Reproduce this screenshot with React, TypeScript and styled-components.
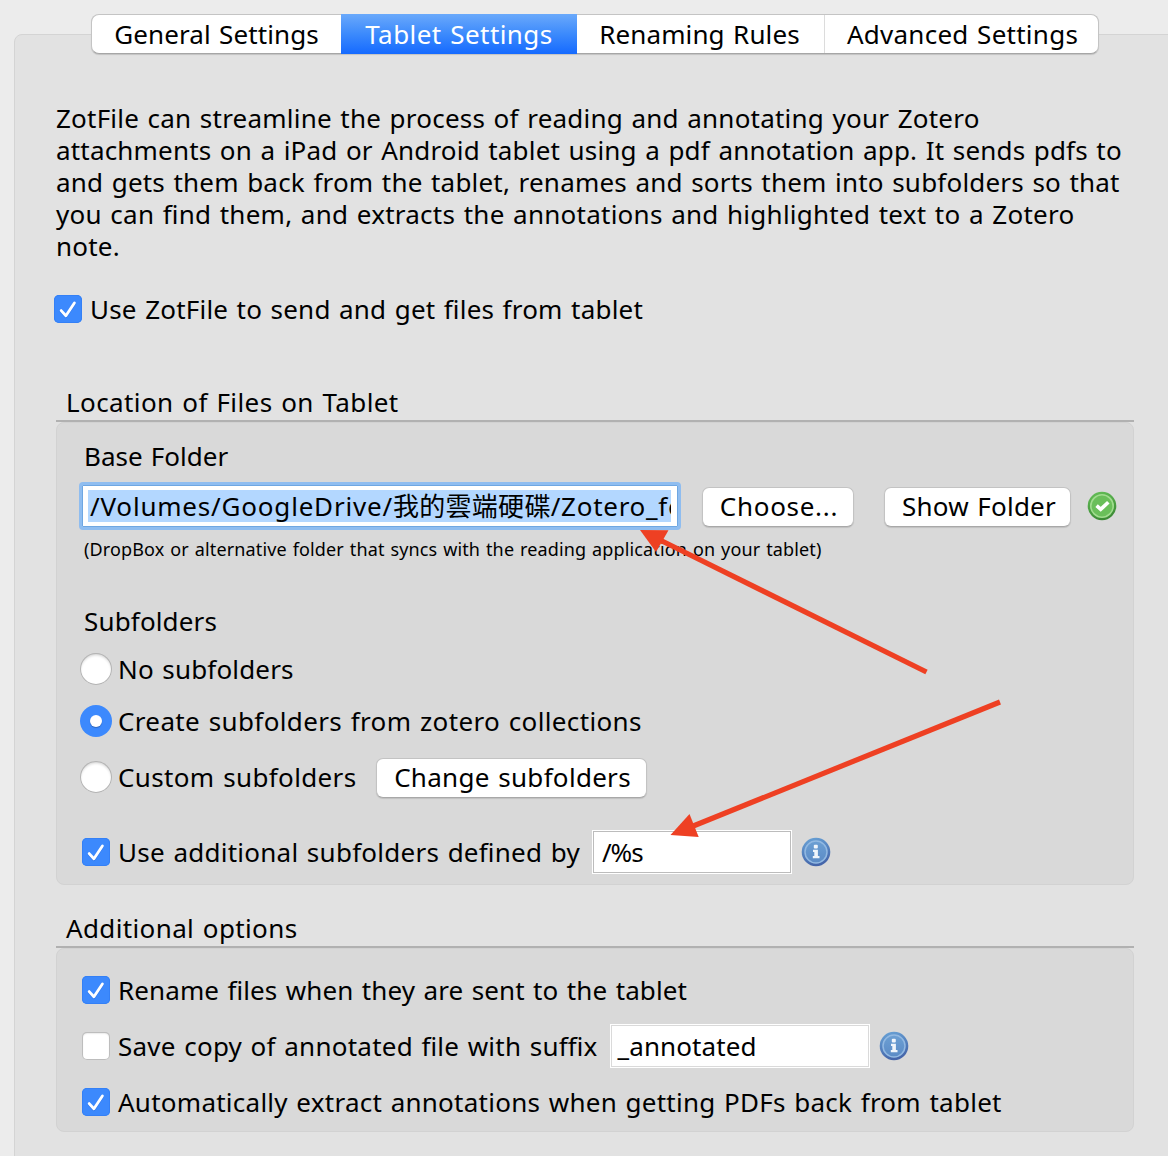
import React from 'react';
import styled, { createGlobalStyle, css } from 'styled-components';

const Global = createGlobalStyle`
  * { box-sizing: border-box; }
  body {
    margin: 0;
    background: #ececec;
    overflow: hidden;
  }
`;

const Window = styled.div`
  position: relative;
  display: flex;
  flex-direction: column;
  width: 1168px;
  height: 1156px;
  padding-top: 14px;
  overflow: hidden;
  background: #ececec;
  color: #000;
  font-family: "Noto Sans", "Noto Sans CJK TC", sans-serif;
  font-size: 26px;
  line-height: 32px;
  white-space: nowrap;
`;

const TabBar = styled.div`
  position: relative;
  z-index: 1;
  display: grid;
  grid-template-columns: 249px 236px 248px 273px;
  width: 1008px;
  height: 40px;
  margin-left: 91px;
  border: 1px solid #c4c4c4;
  border-bottom-color: #a6a6a6;
  border-radius: 8px;
  background: #fff;
  box-shadow: 0 1px 1px rgba(0, 0, 0, 0.14);
`;

const Tab = styled.div<{ $active?: boolean; $divided?: boolean; $shift?: number }>`
  display: flex;
  align-items: center;
  justify-content: center;
  padding-left: ${(p) => p.$shift ?? 0}px;
  ${(p) => p.$divided && css`
    padding-right: 2px;
    border-right: 1px solid #dcdcdc;
  `}
  ${(p) =>
    p.$active &&
    css`
      margin: -1px 0;
      color: #fff;
      background: linear-gradient(#6aa9fb, #3c8afc 50%, #156aff);
    `}
`;

const Text = styled.span<{ $track?: number }>`
  letter-spacing: ${(p) => p.$track ?? 0.3}px;
  word-spacing: 0.058em;
  font-feature-settings: "liga" 1;
`;

const Panel = styled.div`
  flex: 1;
  margin: -20px -2px -2px 14px;
  padding: 67px 0 0 41px;
  border: 1px solid #d4d4d4;
  border-radius: 8px 0 0 0;
  background: #e2e2e2;
`;

const Intro = styled.div`
  display: flex;
  flex-direction: column;
`;

const Row = styled.div<{ $top?: number; $height?: number }>`
  display: flex;
  align-items: center;
  height: ${(p) => p.$height ?? 40}px;
  margin-top: ${(p) => p.$top ?? 0}px;
`;

const EnableRow = styled(Row)`
  margin-left: -2px;
`;

const GroupTitle = styled.div<{ $top: number }>`
  width: 1078px;
  height: 36px;
  margin-top: ${(p) => p.$top}px;
  padding-left: 10px;
  border-bottom: 2px solid #b1b1b1;
`;

const Group = styled.div<{ $height: number; $pad: number }>`
  width: 1078px;
  height: ${(p) => p.$height}px;
  padding: ${(p) => p.$pad}px 0 0 23px;
  border: 1px solid #d2d2d2;
  border-radius: 8px;
  background: #d9d9d9;
`;

const SubTitle = styled.div<{ $top?: number }>`
  margin-top: ${(p) => p.$top ?? 0}px;
  padding-left: 4px;
`;

const Hint = styled.div`
  margin-top: 7px;
  padding-left: 4px;
  font-size: 18px;
  line-height: 24px;
`;

const CheckBox = styled.span<{ $on?: boolean; $inset?: boolean }>`
  display: flex;
  flex: none;
  width: 28px;
  height: 28px;
  margin: 0 8px 0 ${(p) => (p.$inset ? 2 : 0)}px;
  border-radius: 5px;
  background: #fff;
  box-shadow: inset 0 0 0 1px #bdbdbd, inset 0 1px 2px rgba(0, 0, 0, 0.25);
  ${(p) =>
    p.$on &&
    css`
      background: #3c89fd;
      box-shadow: inset 0 0 0 1px #3480f6;
    `}
`;

const Radio = styled.span<{ $on?: boolean }>`
  display: flex;
  flex: none;
  align-items: center;
  justify-content: center;
  width: 32px;
  height: 32px;
  margin-right: 6px;
  border-radius: 50%;
  background: #fff;
  box-shadow: inset 0 0 0 1px #b4b4b4, inset 0 2px 3px rgba(0, 0, 0, 0.2);
  ${(p) =>
    p.$on &&
    css`
      background: #3c89fd;
      box-shadow: none;
      &::after {
        content: "";
        width: 12px;
        height: 12px;
        border-radius: 50%;
        background: #fff;
        box-shadow: 0 1px 1px rgba(0, 0, 0, 0.25);
      }
    `}
`;

const Button = styled.div<{ $width: number; $left: number; $shift?: number }>`
  display: flex;
  flex: none;
  align-items: center;
  justify-content: center;
  width: ${(p) => p.$width}px;
  height: 40px;
  margin: 2px 0 0 ${(p) => p.$left}px;
  padding: 0 0 3px ${(p) => p.$shift ?? 2}px;
  border: 1px solid #c3c3c3;
  border-bottom-color: #a8a8a8;
  border-radius: 7px;
  background: #fff;
  box-shadow: 0 1px 1px rgba(0, 0, 0, 0.12);
`;

const FocusedField = styled.div`
  flex: none;
  width: 602px;
  height: 48px;
  margin-left: -1px;
  padding: 4px 7px 4px 6px;
  border: 3px solid #8fbdf0;
  border-radius: 4px;
  background: #fff;
  box-shadow: inset 0 0 0 1px #6fa7e2;
`;

const Selection = styled.div`
  height: 32px;
  margin-top: 1px;
  padding-left: 2px;
  overflow: hidden;
  background: #b3d7ff;
`;

const Field = styled.div<{ $width: number; $left: number; $line: string; $pad: number }>`
  display: flex;
  flex: none;
  align-items: center;
  width: ${(p) => p.$width}px;
  height: 44px;
  margin-left: ${(p) => p.$left}px;
  padding-left: ${(p) => p.$pad}px;
  border: 1px solid #fff;
  background: #fff;
  box-shadow: inset 0 0 0 1px ${(p) => p.$line};
`;

const Glyph = styled.svg<{ $left?: number }>`
  flex: none;
  display: block;
  margin-left: ${(p) => p.$left ?? 0}px;
`;

const Arrows = styled.svg`
  position: absolute;
  top: 0;
  left: 0;
  z-index: 2;
  pointer-events: none;
`;

const Check = ({ on, inset }: { on?: boolean; inset?: boolean }) => (
  <CheckBox $on={on} $inset={inset}>
    {on && (
      <Glyph width="28" height="28" viewBox="0 0 28 28" fill="none" strokeLinecap="round" strokeLinejoin="round">
        <path d="M7.2 16.6L11.9 21.8L20.4 9" stroke="#2a6fe0" strokeOpacity=".55" strokeWidth="2.8" />
        <path d="M7.2 15.6L11.9 20.8L20.4 8" stroke="#fff" strokeWidth="2.8" />
      </Glyph>
    )}
  </CheckBox>
);

const InfoIcon = ({ left }: { left: number }) => (
  <Glyph $left={left} width="30" height="30" viewBox="0 0 30 30">
    <defs>
      <linearGradient id="infoRim" x1="0" y1="0" x2="0.3" y2="1">
        <stop offset="0" stopColor="#6aa5d8" />
        <stop offset="1" stopColor="#4566aa" />
      </linearGradient>
      <linearGradient id="infoFill" x1="0" y1="0" x2="0" y2="1">
        <stop offset="0" stopColor="#6c9fd3" />
        <stop offset="1" stopColor="#5b8bc6" />
      </linearGradient>
    </defs>
    <circle cx="15" cy="15" r="14.3" fill="url(#infoRim)" />
    <circle cx="15" cy="15" r="11" fill="url(#infoFill)" stroke="#92b9e2" strokeWidth="1.5" />
    <rect x="12.8" y="7.8" width="4" height="3.6" rx="1" fill="#f0f5fb" />
    <path d="M12 12.8h4.9v6.2h1.6v2.2h-6.7v-2.2h1.5v-4H12z" fill="#f0f5fb" />
  </Glyph>
);

const OkIcon = () => (
  <Glyph $left={16} width="30" height="30" viewBox="0 0 30 30">
    <defs>
      <linearGradient id="okRim" x1="0" y1="0" x2="0.3" y2="1">
        <stop offset="0" stopColor="#66c159" />
        <stop offset="1" stopColor="#3c8b35" />
      </linearGradient>
    </defs>
    <circle cx="15" cy="15" r="14.3" fill="url(#okRim)" />
    <circle cx="15" cy="15" r="11.2" fill="#6abf5a" stroke="#a0dc8e" strokeWidth="1.6" />
    <path d="M9.6 14.7L13.7 18.4L21.3 11.2" fill="none" stroke="#fff" strokeWidth="3.6" />
  </Glyph>
);

export default function App() {
  return (
    <Window>
      <Global />
      <TabBar>
        <Tab><Text $track={0.1}>General Settings</Text></Tab>
        <Tab $active><Text $track={0.43}>Tablet Settings</Text></Tab>
        <Tab $divided><Text $track={0.12}>Renaming Rules</Text></Tab>
        <Tab $shift={2}><Text $track={0.26}>Advanced Settings</Text></Tab>
      </TabBar>
      <Panel>
        <Intro>
          <Text $track={0.22}>ZotFile can streamline the process of reading and annotating your Zotero</Text>
          <Text $track={0.185}>attachments on a iPad or Android tablet using a pdf annotation app. It sends pdfs to</Text>
          <Text $track={0.2}>and gets them back from the tablet, renames and sorts them into subfolders so that</Text>
          <Text $track={0.25}>you can find them, and extracts the annotations and highlighted text to a Zotero</Text>
          <Text $track={0.2}>note.</Text>
        </Intro>
        <EnableRow $top={31} $height={32}>
          <Check on />
          <Text $track={0.2}>Use ZotFile to send and get files from tablet</Text>
        </EnableRow>

        <GroupTitle $top={61}><Text $track={0.41}>Location of Files on Tablet</Text></GroupTitle>
        <Group $height={463} $pad={17}>
          <SubTitle><Text $track={0}>Base Folder</Text></SubTitle>
          <Row $top={10} $height={48}>
            <FocusedField>
              <Selection>
                <Text $track={0.8}>/Volumes/GoogleDrive/</Text>
                <Text $track={0.3}>我的雲端硬碟</Text>
                <Text $track={0.72}>/Zotero_fo</Text>
              </Selection>
            </FocusedField>
            <Button $width={152} $left={21}><Text $track={0.7}>Choose...</Text></Button>
            <Button $width={187} $left={30} $shift={3}><Text $track={0.2}>Show Folder</Text></Button>
            <OkIcon />
          </Row>
          <Hint><Text $track={0.14}>(DropBox or alternative folder that syncs with the reading application on your tablet)</Text></Hint>
          <SubTitle $top={44}><Text $track={0.15}>Subfolders</Text></SubTitle>
          <Row $top={12}>
            <Radio />
            <Text $track={0.17}>No subfolders</Text>
          </Row>
          <Row $top={12}>
            <Radio $on />
            <Text $track={0.36}>Create subfolders from zotero collections</Text>
          </Row>
          <Row $top={16}>
            <Radio />
            <Text $track={0.36}>Custom subfolders</Text>
            <Button $width={271} $left={19} $shift={3}><Text $track={0.29}>Change subfolders</Text></Button>
          </Row>
          <Row $top={33} $height={44}>
            <Check on inset />
            <Text $track={0.25}>Use additional subfolders defined by</Text>
            <Field $width={200} $left={12} $line="#bcbcbc" $pad={9}><Text $track={-1}>/%s</Text></Field>
            <InfoIcon left={9} />
          </Row>
        </Group>

        <GroupTitle $top={27}><Text $track={0.37}>Additional options</Text></GroupTitle>
        <Group $height={184} $pad={21}>
          <Row>
            <Check on inset />
            <Text $track={0.11}>Rename files when they are sent to the tablet</Text>
          </Row>
          <Row $top={14} $height={44}>
            <Check inset />
            <Text $track={0.24}>Save copy of annotated file with suffix</Text>
            <Field $width={260} $left={12} $line="#dadada" $pad={7}><Text $track={0.1}>_annotated</Text></Field>
            <InfoIcon left={9} />
          </Row>
          <Row $top={14}>
            <Check on inset />
            <Text $track={0.255}>Automatically extract annotations when getting PDFs back from tablet</Text>
          </Row>
        </Group>
      </Panel>
      <Arrows width="1168" height="1156" viewBox="0 0 1168 1156" fill="#ee4023" stroke="#ee4023">
        <path d="M661 540.5L926.5 672" strokeWidth="5.2" />
        <path d="M640 530L668.5 530.3L656 552Z" stroke="none" />
        <path d="M692 826.5L1000 702" strokeWidth="5.2" />
        <path d="M670.5 835L689.5 814L698.7 837Z" stroke="none" />
      </Arrows>
    </Window>
  );
}
